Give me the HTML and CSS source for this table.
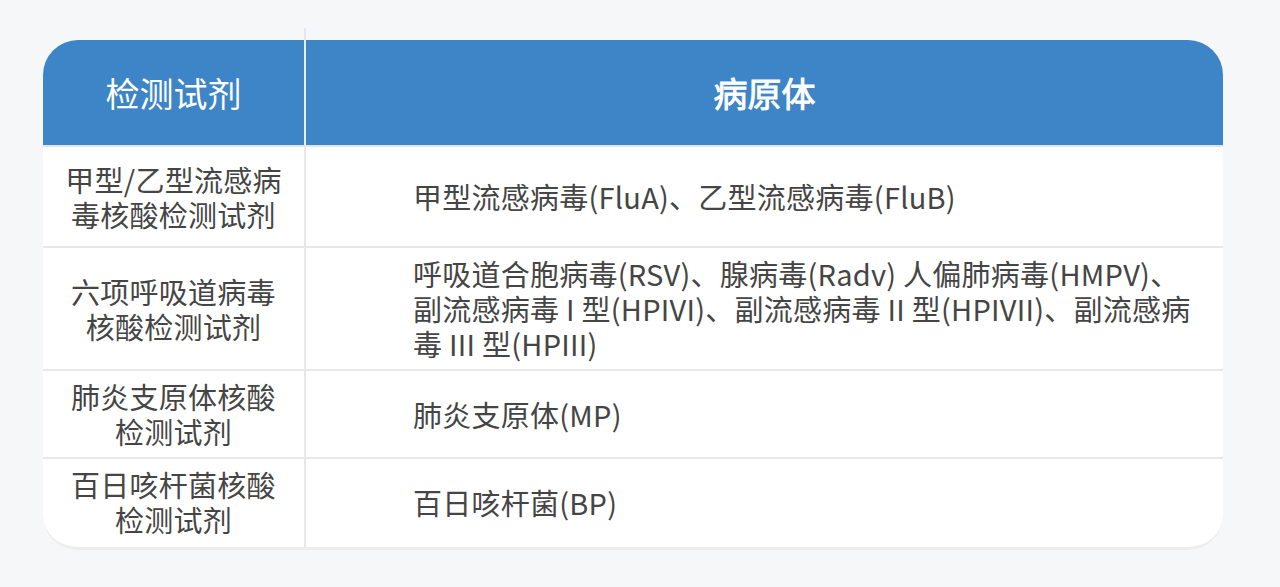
FILE: index.html
```html
<!DOCTYPE html>
<html lang="zh-CN">
<head>
<meta charset="utf-8">
<title>检测试剂与病原体</title>
<link rel="stylesheet" href="styles.css">
</head>
<body>
<div class="page">
  <div class="card">
    <table class="grid">
      <colgroup><col class="col-kit"><col class="col-path"></colgroup>
      <thead>
        <tr><th class="kit-h">检测试剂</th><th class="path-h">病原体</th></tr>
      </thead>
      <tbody>
        <tr class="row-tall">
          <td class="kit">甲型/乙型流感病毒核酸检测试剂</td>
          <td class="path">甲型流感病毒(FluA)、乙型流感病毒(FluB)</td>
        </tr>
        <tr>
          <td class="kit">六项呼吸道病毒核酸检测试剂</td>
          <td class="path">呼吸道合胞病毒(RSV)、腺病毒(Radv) 人偏肺病毒(HMPV)、副流感病毒 I 型(HPIVI)、副流感病毒 II 型(HPIVII)、副流感病毒 III 型(HPIII)</td>
        </tr>
        <tr>
          <td class="kit">肺炎支原体核酸检测试剂</td>
          <td class="path">肺炎支原体(MP)</td>
        </tr>
        <tr class="row-last">
          <td class="kit">百日咳杆菌核酸检测试剂</td>
          <td class="path">百日咳杆菌(BP)</td>
        </tr>
      </tbody>
    </table>
  </div>
</div>
</body>
</html>
```
FILE: styles.css
```css
html, body {
  margin: 0;
  background: #f6f7f9;
  font-family: "Noto Sans CJK SC", "Noto Sans", sans-serif;
}
.page {
  padding: 40px 57px 0 43px;
}
.card {
  background: #ffffff;
  border-radius: 35px;
  border-bottom: 3px solid #ededed;
}
.grid {
  width: 100%;
  border-collapse: separate;
  border-spacing: 0;
  table-layout: fixed;
}
.col-kit { width: 263px; }
.grid th {
  height: 105px;
  padding: 0;
  background: #3d85c6;
  color: #ffffff;
  font-size: 34px;
  font-weight: 400;
  line-height: 40px;
  border-bottom: 2px solid #dfe5ec;
  vertical-align: middle;
}
.kit-h {
  position: relative;
  border-top-left-radius: 35px;
  border-right: 2px solid #e6edf5;
}
.kit-h::before {
  content: "";
  position: absolute;
  right: -2px;
  top: -12px;
  width: 2px;
  height: 12px;
  background: #e3e6ea;
}
.path-h {
  border-top-right-radius: 35px;
  font-weight: 700;
  -webkit-text-stroke: 0.9px #ffffff;
}
.grid td {
  font-size: 29px;
  line-height: 35px;
  letter-spacing: 0.25px;
  color: #454545;
  border-bottom: 2px solid #e8e8e8;
  vertical-align: middle;
}
.kit {
  text-align: center;
  padding: 8px 20px;
  border-right: 2px solid #e8e8e8;
}
.path {
  padding: 8px 30px 8px 107px;
}
.row-tall td {
  height: 83px;
}
.row-last td {
  padding-bottom: 10px;
}
.grid tbody tr:last-child td {
  border-bottom: none;
}
```
